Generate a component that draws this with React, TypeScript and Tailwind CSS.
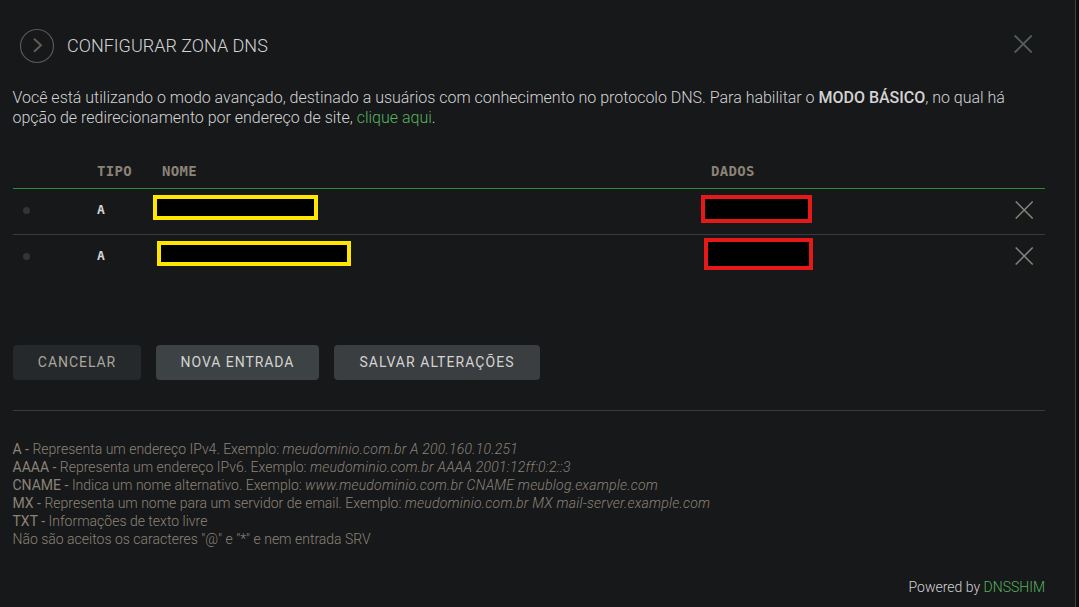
import React from "react";

type CrossProps = { className: string; width: number };

function Cross({ className, width }: CrossProps) {
  return (
    <svg className={className} viewBox="0 0 18 18" fill="none" stroke="currentColor" strokeWidth={width}>
      <path d="M0.7 0.5L17.7 17.5M17.7 0.5L0.7 17.5" />
    </svg>
  );
}

const notes = [
  { key: "A", text: "Representa um endereço IPv4. Exemplo: ", example: "meudominio.com.br A 200.160.10.251" },
  { key: "AAAA", text: "Representa um endereço IPv6. Exemplo: ", example: "meudominio.com.br AAAA 2001:12ff:0:2::3" },
  { key: "CNAME", text: "Indica um nome alternativo. Exemplo: ", example: "www.meudominio.com.br CNAME meublog.example.com" },
  { key: "MX", text: "Representa um nome para um servidor de email. Exemplo: ", example: "meudominio.com.br MX mail-server.example.com" },
  { key: "TXT", text: "Informações de texto livre", example: "" },
];

const rows = [
  {
    row: "h-[46px] border-b border-[#3a3b3c]",
    name: "ml-0 mt-[6px] h-[25px] w-[165px]",
    data: "ml-0 mt-[6px] h-[28px] w-[111px]",
  },
  {
    row: "h-[46px]",
    name: "ml-1 mt-[6px] h-[25px] w-[194px]",
    data: "ml-[3px] mt-[3px] h-[32px] w-[109px]",
  },
];

const columns = "grid grid-cols-[84px_56px_548px_314px_30px]";
const mono = "font-['DejaVu_Sans_Mono',monospace] font-bold";

export default function App() {
  return (
    <div className="flex h-[607px] w-[1079px] overflow-hidden bg-[#0d0d0e] font-[Roboto,sans-serif] text-[#d3d3d3]">
      <main className="flex w-[1076px] flex-col border-r border-[#414244] bg-[#17181a] pl-[13px] pr-[30px]">
        <header className="flex h-[88px] items-start justify-between pl-[6px] pt-[28px]">
          <div className="flex items-center">
            <svg className="size-9 text-[#55585a]" viewBox="0 0 36 36" fill="none" stroke="currentColor">
              <circle cx="18" cy="18" r="16.5" strokeWidth="1.2" />
              <path className="text-[#665d55]" stroke="currentColor" strokeWidth="1.9" d="M15 10.8L22 17.2L15 23.8" />
            </svg>
            <h1 className="ml-3 whitespace-nowrap text-[18px] font-light leading-9">CONFIGURAR ZONA DNS</h1>
          </div>
          <Cross className="mr-[13px] mt-[7px] size-[18px] text-[#566061]" width={1.8} />
        </header>

        <p className="-ml-[0.5px] h-[72px] whitespace-nowrap text-[16px] font-light leading-5 tracking-[-0.008px]">
          Você está utilizando o modo avançado, destinado a usuários com conhecimento no protocolo DNS. Para habilitar o{" "}
          <b className="font-medium">MODO BÁSICO</b>, no qual há
          <br />
          opção de redirecionamento por endereço de site, <a className="text-[#55b45c]">clique aqui</a>.
        </p>

        <section className="h-[185px]">
          <div className={`${columns} ${mono} h-[29px] border-b border-[#2c8a3d] text-[14px] leading-[22px] tracking-[0.35px] text-[#8b8377]`}>
            <span />
            <span>TIPO</span>
            <span className="pl-[9px]">NOME</span>
            <span className="pl-[10px]">DADOS</span>
          </div>
          {rows.map((r, i) => (
            <div key={i} className={`${columns} ${r.row}`}>
              <div className="ml-[10px] mt-[18px] size-[7px] rounded-full bg-[#333436]" />
              <span className={`${mono} text-[13px] leading-[42px]`}>A</span>
              <div className={`border-4 border-[#ffe600] bg-black ${r.name}`} />
              <div className={`border-4 border-[#e61919] bg-black ${r.data}`} />
              <Cross className="mt-[12px] size-[18px] text-[#8b8377]" width={1.5} />
            </div>
          ))}
        </section>

        <div className="flex h-[66px] gap-[15px] border-b border-[#3a3b3c] text-[14px] tracking-[0.95px]">
          <button className="h-[35px] w-[128px] rounded-[4px] bg-[#25292b] text-[#aaa69d]">CANCELAR</button>
          <button className="h-[35px] w-[163px] rounded-[4px] bg-[#3d4344]">NOVA ENTRADA</button>
          <button className="h-[35px] w-[206px] rounded-[4px] bg-[#3b3e40] tracking-[1.05px]">SALVAR ALTERAÇÕES</button>
        </div>

        <div className="-ml-[0.5px] mt-[29px] whitespace-nowrap text-[14px] font-light leading-[18px] text-[#8b8377]">
          {notes.map((n) => (
            <p key={n.key}>
              <b className="font-normal">{n.key} - </b>
              {n.text}
              <i className="tracking-[0.22px]">{n.example}</i>
            </p>
          ))}
          <p>Não são aceitos os caracteres "@" e "*" e nem entrada SRV</p>
        </div>

        <footer className="mt-[29px] text-right text-[14px] font-light leading-[20px]">
          Powered by <a className="text-[#55b45c]">DNSSHIM</a>
        </footer>
      </main>
    </div>
  );
}
